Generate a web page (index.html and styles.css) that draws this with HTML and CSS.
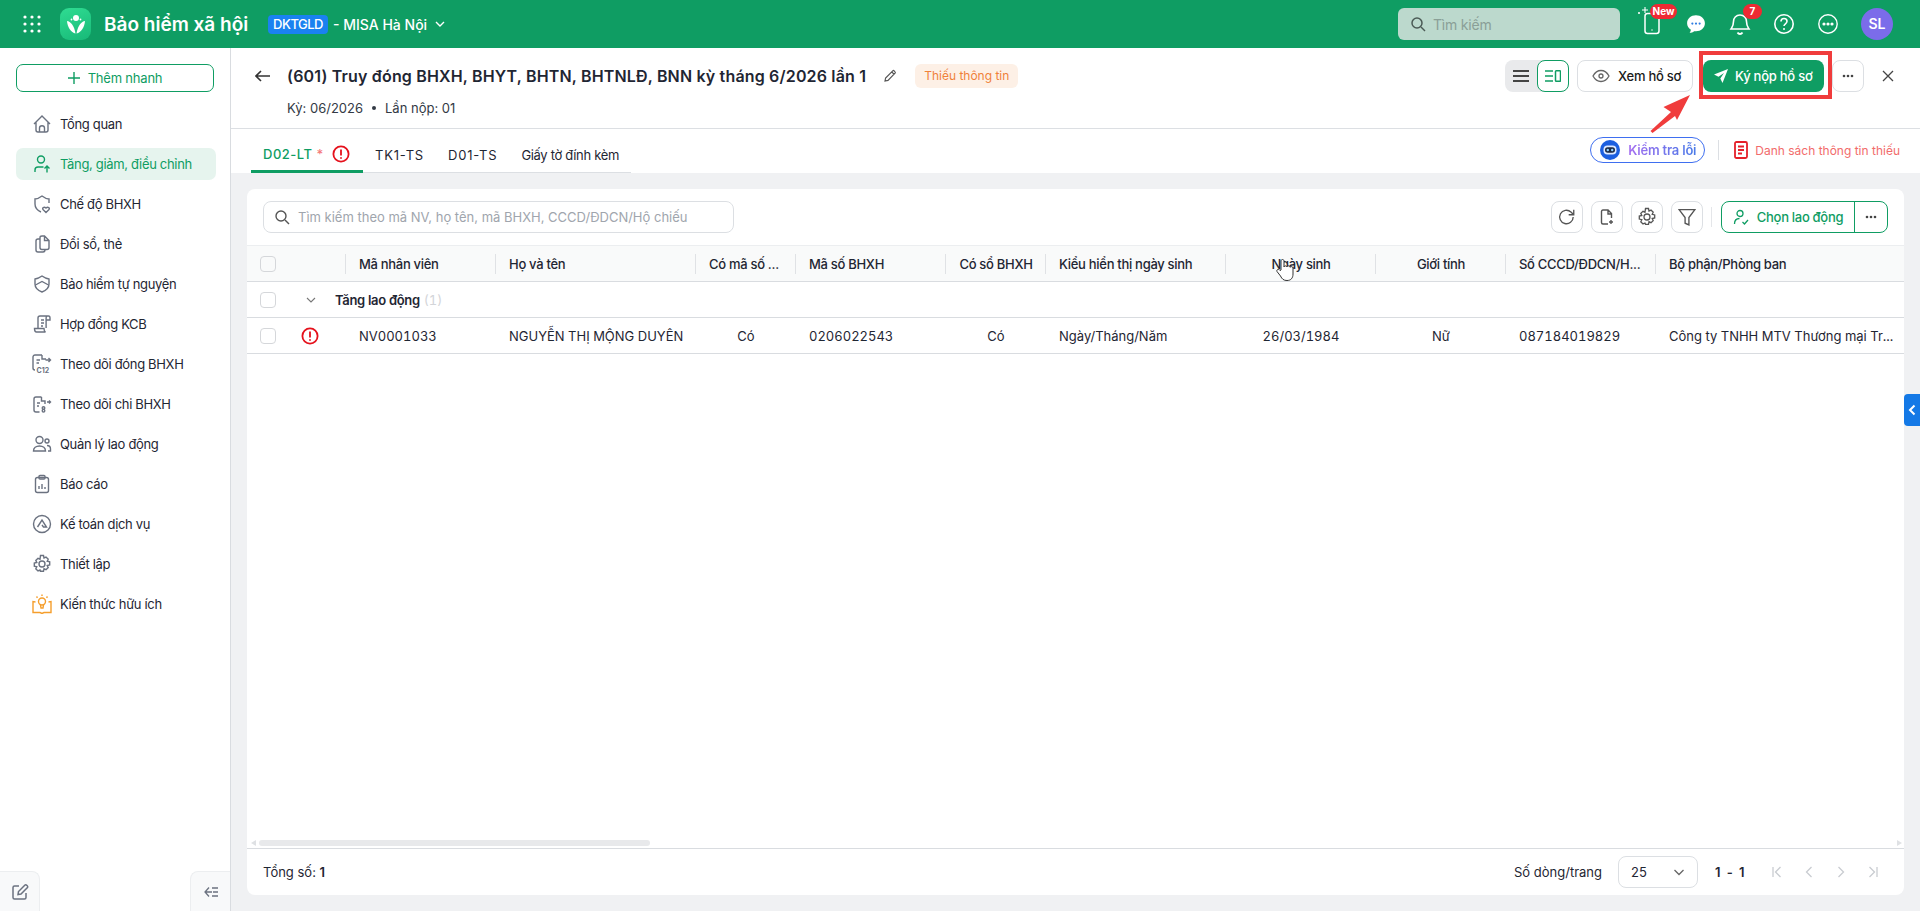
FILE: index.html
```html
<!DOCTYPE html>
<html lang="vi">

<head>
   <meta charset="UTF-8">
   <meta name="viewport" content="width=device-width, initial-scale=1.0">
   <title>Bảo hiểm xã hội</title>

   <link rel="stylesheet" href="styles.css">
</head>

<body>
   <header class="top">
      <svg class="top__grid" width="18" height="18" viewBox="0 0 18 18" fill="#fff">
         <circle cx="2" cy="2" r="1.6"/><circle cx="9" cy="2" r="1.6"/><circle cx="16" cy="2" r="1.6"/>
         <circle cx="2" cy="9" r="1.6"/><circle cx="9" cy="9" r="1.6"/><circle cx="16" cy="9" r="1.6"/>
         <circle cx="2" cy="16" r="1.6"/><circle cx="9" cy="16" r="1.6"/><circle cx="16" cy="16" r="1.6"/>
      </svg>
      <div class="top__logo">
         <svg width="20" height="20" viewBox="0 0 20 20" fill="#fff">
            <circle cx="10" cy="4" r="3"/>
            <circle cx="5.500" cy="5.500" r=".9"/><circle cx="14.500" cy="5.500" r=".9"/>
            <path d="M1 7c3.500.5 7 4 8.500 12.500C5 18.500 1.500 13.500 1 7z"/>
            <path d="M19 7c-3.500.5-7 4-8.500 12.500C15 18.500 18.500 13.500 19 7z"/>
         </svg>
      </div>
      <div class="top__title">Bảo hiểm xã hội</div>
      <div class="top__badge">DKTGLD</div>
      <div class="top__org">- MISA Hà Nội</div>
      <svg class="top__chevron" width="12" height="12" viewBox="0 0 12 12" fill="none" stroke="#fff" stroke-width="1.4">
         <path d="M2 4l4 4 4-4"/>
      </svg>

      <div class="top__right">
         <div class="top__search">
            <svg width="16" height="16" viewBox="0 0 16 16" fill="none" stroke="#4b5a55" stroke-width="1.5">
               <circle cx="7" cy="7" r="5"/><path d="M11 11l4 4"/>
            </svg>
            <span>Tìm kiếm</span>
         </div>
         <div class="top__icons">
            <div class="top__icon">
               <svg class="top__phone" width="28" height="32" viewBox="0 0 28 32" fill="none" stroke="#fff" stroke-width="1.5">
                  <rect x="7" y="5.500" width="14" height="20" rx="2.500"/>
                  <path d="M13.500 22h1"/>
                  <path d="M7 -1v6M4 2h6M1 4v2M0 5h2" stroke-width="1.100"/>
               </svg>
               <span class="top__new">New</span>
            </div>
            <div class="top__icon">
               <svg width="20" height="20" viewBox="0 0 22 22">
                  <path fill="#fff" d="M11 1.500c5.400 0 9.800 3.800 9.800 8.800s-4.400 8.800-9.800 8.800c-.7 0-1.400-.1-2-.2-1.400 1.200-3.200 1.700-5 1.700 .8-.9 1.300-2 1.400-3.200-2.500-1.500-4.200-4-4.200-7.100 0-5 4.300-8.800 9.600-8.800z"/>
                  <circle cx="7" cy="10.500" r="1.200" fill="#2f7de1"/><circle cx="11" cy="10.500" r="1.200" fill="#2f7de1"/><circle cx="15" cy="10.500" r="1.200" fill="#2f7de1"/>
               </svg>
            </div>
            <div class="top__icon">
               <svg width="22" height="24" viewBox="0 0 22 24" fill="none" stroke="#fff" stroke-width="1.6">
                  <path d="M11 3c-4 0-6.500 3-6.500 6.500 0 4.500-1.500 6-2.500 7.500h18c-1-1.500-2.500-3-2.500-7.500C17.500 6 15 3 11 3z"/>
                  <path d="M8.500 20.500c.6 1 1.500 1.500 2.500 1.500s1.900-.5 2.500-1.500" stroke-width="1.800"/>
               </svg>
               <span class="top__count">7</span>
            </div>
            <div class="top__icon">
               <svg width="22" height="22" viewBox="0 0 22 22" fill="none" stroke="#fff" stroke-width="1.6">
                  <circle cx="11" cy="11" r="9.200"/>
                  <path d="M8 8.500c0-1.800 1.400-3 3-3s3 1.200 3 2.800c0 2.400-3 2.500-3 4.700"/>
                  <circle cx="11" cy="16" r="1" fill="#fff" stroke="none"/>
               </svg>
            </div>
            <div class="top__icon">
               <svg width="22" height="22" viewBox="0 0 22 22" fill="none" stroke="#fff" stroke-width="1.400">
                  <circle cx="11" cy="11" r="9.200"/>
                  <circle cx="7" cy="11" r=".9" fill="#fff"/><circle cx="11" cy="11" r=".9" fill="#fff"/><circle cx="15" cy="11" r=".9" fill="#fff"/>
               </svg>
            </div>
         </div>
         <div class="top__avatar">SL</div>
      </div>
   </header>

   <div class="app">
      <aside class="side">
         <div class="side__add">
            <svg width="12" height="12" viewBox="0 0 12 12" stroke="#0f9d63" stroke-width="1.400"><path d="M6 0v12M0 6h12"/></svg>
            Thêm nhanh
         </div>

         <nav class="side__nav">
            <div class="side__item">
               <svg class="side__icon" viewBox="0 0 20 20"><path d="M2 10l8-8 8 8M4 8.500V16c0 1 .5 2 2 2h8c1.500 0 2-1 2-2V8.500M7.500 18v-4c0-3 5-3 5 0v4"/></svg>
               Tổng quan
            </div>
            <div class="side__item side__item--active">
               <svg class="side__icon" viewBox="0 0 20 20"><circle cx="9" cy="5.500" r="3.500"/><path d="M3 18v-2c0-2 1-3 3-3h5.500M15 18.500v-6.500M12.500 14.500L15 12l2.500 2.500"/></svg>
               Tăng, giảm, điều chỉnh
            </div>
            <div class="side__item">
               <svg class="side__icon" viewBox="0 0 20 20"><path d="M17 9V5c-3 0-5-1.500-7-3-2 1.500-4 3-7 3v5c0 4 2.500 6.500 6 8"/><path d="M14 18.500l-3-3c-1.200-1.500 1-3.200 3-1.500 2-1.700 4.200 0 3 1.500z"/></svg>
               Chế độ BHXH
            </div>
            <div class="side__item">
               <svg class="side__icon" viewBox="0 0 20 20"><path d="M8 13.500V3.500C8 2.500 9 2 10 2h2.500L17 6.500v7c0 1-1 2-2 2h-5c-1 0-2-1-2-2zM12.500 2v4.500H17"/><path d="M8 5H6C5 5 4 6 4 7v9c0 1 1 2 2 2h5c1 0 2-1 2-2.500"/></svg>
               Đổi sổ, thẻ
            </div>
            <div class="side__item">
               <svg class="side__icon" viewBox="0 0 20 20"><path d="M10 2C8 3.500 6 4.500 3 5v5c0 4 3 6.500 7 8 4-1.500 7-4 7-8V5c-3-.5-5-1.500-7-3z"/><path d="M3.500 11L10 7.500l6.500 3.500"/></svg>
               Bảo hiểm tự nguyện
            </div>
            <div class="side__item">
               <svg class="side__icon" viewBox="0 0 20 20"><path d="M6 14V4c0-1 1-2 2-2h8.500c1 0 1.500 1 1.500 2v2h-3.500M15 2c-.8.300-.9 1-.9 2v10M9 6h3M9 9h3M9 12h2M2.500 14.500H12c0 1.500.5 3 1.500 3.500h-9c-1.500 0-2-2-2-3.500z"/></svg>
               Hợp đồng KCB
            </div>
            <div class="side__item">
               <svg class="side__icon" viewBox="0 0 20 20"><path d="M10 1H3C2 1 1 1.500 1 3v11c0 1 .5 2 2 2M10 1v4h4M4.500 6H8M4.500 9H7M13.500 6h5M16.500 4l2 2-2 2"/><text x="4.500" y="19" class="side__c12">C12</text></svg>
               Theo dõi đóng BHXH
            </div>
            <div class="side__item">
               <svg class="side__icon" viewBox="0 0 20 20"><path d="M9.500 3H4C3 3 2 3.500 2 5v11c0 1 1 2 2 2h3.500M9.500 3v4H13v3M15 8h3.500M17 6.500L18.500 8 17 9.500M5 9h3M5 12h2"/><circle cx="11.500" cy="14" r="1.300"/><circle cx="11.500" cy="16.700" r="1.300"/></svg>
               Theo dõi chi BHXH
            </div>
            <div class="side__item">
               <svg class="side__icon" viewBox="0 0 20 20"><circle cx="7.500" cy="6" r="3.500"/><circle cx="15" cy="7" r="2"/><path d="M1.500 17c0-3 2.500-5 6-5s6 2 6 5zM15 11.500c2 0 3.500 1.500 3.500 3.500V17h-2.500"/></svg>
               Quản lý lao động
            </div>
            <div class="side__item">
               <svg class="side__icon" viewBox="0 0 20 20"><rect x="3.500" y="3.500" width="13" height="15" rx="2"/><rect x="7" y="1.500" width="6" height="3.500" rx="1"/><path d="M7 15v-3M10 15v-5M13 15v-2"/></svg>
               Báo cáo
            </div>
            <div class="side__item">
               <svg class="side__icon" viewBox="0 0 20 20"><circle cx="10" cy="10" r="8.500"/><path d="M5.500 13L10 6l4.500 7h-3L10 11"/></svg>
               Kế toán dịch vụ
            </div>
            <div class="side__item">
               <svg class="side__icon" viewBox="0 0 20 20"><circle cx="10" cy="10" r="3"/><path d="M8.500 1.500h3l.5 2.500 2-.9 2.200 2.100-1 2.100 2.500.6v3l-2.500.6 1 2.100-2.200 2.100-2-.9-.5 2.500h-3L8 16l-2 .9-2.200-2.100 1-2.100-2.500-.6v-3L4.800 8.500l-1-2.100L6 4.300l2 .9z"/></svg>
               Thiết lập
            </div>
            <div class="side__item">
               <svg class="side__icon side__icon--orange" viewBox="0 0 20 20"><circle cx="10" cy="7.500" r="3.500"/><path d="M8.500 11l.5 3h2l.5-3M10 .5V2M4.500 2.500L5.500 3.700M15.500 2.500l-1 1.200M3.500 8L1 7.500v11h7l2 1 2-1h7v-11L16.500 8"/></svg>
               Kiến thức hữu ích
            </div>
         </nav>

         <div class="side__bottom">
            <div class="side__tool">
               <svg width="18" height="18" viewBox="0 0 18 18" fill="none" stroke="#6b7280" stroke-width="1.500"><path d="M8 3H3.500C2.500 3 2 3.500 2 4.500v10c0 1 .5 1.500 1.500 1.500h10c1 0 1.500-.5 1.500-1.500V10M7 11.500l.5-3 6.500-6.500c1-1 3.500 1.500 2.500 2.500L10 11z"/></svg>
            </div>
            <div class="side__tool">
               <svg width="14" height="12" viewBox="0 0 14 12" fill="none" stroke="#6b7280" stroke-width="1.300"><path d="M5 1.500L1 6l4 4.500M1 6h7M8 2h6M9 6h5M8 10h6"/></svg>
            </div>
         </div>
      </aside>

      <main class="main">
         <section class="head">
            <div class="head__left">
               <div class="head__line">
                  <svg class="head__back" width="16" height="12" viewBox="0 0 16 12" fill="none" stroke="#333" stroke-width="1.600"><path d="M6 1L1 6l5 5M1 6h14"/></svg>
                  <div class="head__title">(601) Truy đóng BHXH, BHYT, BHTN, BHTNLĐ, BNN kỳ tháng 6/2026 lần 1</div>
                  <svg width="14" height="14" viewBox="0 0 14 14" fill="none" stroke="#555" stroke-width="1.200"><path d="M2 12l.6-3L10 1.600c.6-.6 2.900 1.700 2.300 2.300L5 11.400zM8.800 3l2.200 2.200"/></svg>
                  <div class="head__tag">Thiếu thông tin</div>
               </div>
               <div class="head__sub">Kỳ: 06/2026<span class="head__dot"></span>Lần nộp: 01</div>
            </div>

            <div class="head__actions">
               <div class="view">
                  <div class="view__item">
                     <svg width="16" height="12" viewBox="0 0 16 12" stroke="#444" stroke-width="1.800"><path d="M0 1h16M0 6h16M0 11h16"/></svg>
                  </div>
                  <div class="view__item view__item--on">
                     <svg width="16" height="12" viewBox="0 0 16 12" fill="none" stroke="#0f9d63" stroke-width="1.500"><path d="M0 1h8M0 6h8M0 11h8"/><rect x="10.500" y=".8" width="5" height="10.400" rx=".8"/></svg>
                  </div>
               </div>
               <div class="btn btn--see">
                  <svg width="18" height="14" viewBox="0 0 18 14" fill="none" stroke="#666" stroke-width="1.300"><path d="M1 7c2-3.700 4.800-5.500 8-5.500S15 3.300 17 7c-2 3.700-4.800 5.500-8 5.500S3 10.700 1 7z"/><circle cx="9" cy="7" r="2"/></svg>
                  Xem hồ sơ
               </div>
               <div class="btn btn--main">
                  <svg width="14" height="14" viewBox="0 0 14 14" fill="#fff"><path d="M14 0L0 5.500l4.500 2.200L10 4 6.300 9.500 8.500 14z"/></svg>
                  Ký nộp hồ sơ
                  <span class="mark"></span>
               </div>
               <div class="btn btn--more">
                  <svg width="12" height="4" viewBox="0 0 12 4" fill="#444"><circle cx="2" cy="2" r="1.300"/><circle cx="6" cy="2" r="1.300"/><circle cx="10" cy="2" r="1.300"/></svg>
               </div>
               <svg class="head__close" width="12" height="12" viewBox="0 0 12 12" stroke="#444" stroke-width="1.300"><path d="M1 1l10 10M11 1L1 11"/></svg>
            </div>

            <svg class="arrow" width="42" height="42" viewBox="0 0 42 42"><path fill="#f03c3c" d="M40 2L13.500 14l7.500 5L.5 38l2 2L25 23l2 4z"/></svg>
         </section>

         <section class="tabs">
            <div class="tabs__list">
               <div class="tab tab--on tab--code">D02-LT <span class="tab__star">*</span>
                  <svg class="err" viewBox="0 0 18 18"><circle cx="9" cy="9" r="7.600"/><path d="M9 4.500v6M9 12.300v1.400"/></svg>
               </div>
               <div class="tab tab--code">TK1-TS</div>
               <div class="tab tab--code">D01-TS</div>
               <div class="tab tab--doc">Giấy tờ đính kèm</div>
            </div>

            <div class="tabs__right">
               <div class="check">
                  <svg width="20" height="20" viewBox="0 0 20 20">
                     <circle cx="10" cy="10" r="10" fill="#1c5fe0"/>
                     <rect x="3.500" y="5.500" width="13" height="9" rx="4" fill="#dfeaff"/>
                     <rect x="5" y="7.200" width="10" height="5.600" rx="2.700" fill="#1e2a44"/>
                     <circle cx="7.800" cy="10" r="1.200" fill="#8fd0ff"/><circle cx="12.200" cy="10" r="1.200" fill="#8fd0ff"/>
                  </svg>
                  <span class="check__text">Kiểm tra lỗi</span>
               </div>
               <div class="tabs__sep"></div>
               <div class="missing">
                  <svg width="14" height="18" viewBox="0 0 14 18" fill="none" stroke="#e5202a" stroke-width="1.800"><rect x="1" y="1" width="12" height="16" rx="1.500"/><path d="M4 5.500h6M4 9h6M4 12.500h4"/></svg>
                  Danh sách thông tin thiếu
               </div>
            </div>
         </section>

         <section class="body">
            <div class="card">
               <div class="bar">
                  <div class="bar__search">
                     <svg width="16" height="16" viewBox="0 0 16 16" fill="none" stroke="#555" stroke-width="1.400"><circle cx="7" cy="7" r="5"/><path d="M11 11l4 4"/></svg>
                     <span>Tìm kiếm theo mã NV, họ tên, mã BHXH, CCCD/ĐDCN/Hộ chiếu</span>
                  </div>
                  <div class="bar__right">
                     <div class="bar__btn">
                        <svg width="18" height="18" viewBox="0 0 16 16" fill="none" stroke="#555" stroke-width="1.200"><path d="M13.500 8a6 6 0 1 1-2-4.500L14 6M14 1.500V6H9.500"/></svg>
                     </div>
                     <div class="bar__btn">
                        <svg width="16" height="16" viewBox="0 0 16 16" fill="none" stroke="#555" stroke-width="1.400"><path d="M9 15H4c-1 0-1.500-.5-1.500-1.500v-11C2.500 1.500 3 1 4 1h5l3.500 3.500V9M9 1v4h3.500M12 11v4M10 13h4"/></svg>
                     </div>
                     <div class="bar__btn">
                        <svg width="20" height="20" viewBox="0 0 20 20" fill="none" stroke="#555" stroke-width="1.300"><circle cx="10" cy="10" r="3"/><path d="M8.500 1.500h3l.5 2.500 2-.9 2.200 2.100-1 2.100 2.500.6v3l-2.500.6 1 2.100-2.200 2.100-2-.9-.5 2.500h-3L8 16l-2 .9-2.200-2.100 1-2.100-2.500-.6v-3L4.800 8.500l-1-2.100L6 4.300l2 .9z"/></svg>
                     </div>
                     <div class="bar__btn">
                        <svg width="18" height="18" viewBox="0 0 16 16" fill="none" stroke="#555" stroke-width="1.200"><path d="M1 1.500h14L9.700 8.500v6.500l-3.400-1.500v-5z"/></svg>
                     </div>
                     <div class="bar__sep"></div>
                     <div class="pick">
                        <div class="pick__main">
                           <svg width="16" height="16" viewBox="0 0 16 16" fill="none" stroke="#0f9d63" stroke-width="1.300"><circle cx="7" cy="4.500" r="3"/><path d="M1.500 15c0-3.500 2-5.500 5-5.500M9.500 13l2 2 3.500-4"/></svg>
                           Chọn lao động
                        </div>
                        <div class="pick__more">
                           <svg width="12" height="4" viewBox="0 0 12 4" fill="#444"><circle cx="2" cy="2" r="1.300"/><circle cx="6" cy="2" r="1.300"/><circle cx="10" cy="2" r="1.300"/></svg>
                        </div>
                     </div>
                  </div>
               </div>

               <div class="grid">
                  <table class="table">
                     <colgroup>
                        <col class="w40"><col class="w59"><col class="w150"><col class="w200"><col class="w100"><col class="w150"><col class="w100"><col class="w180"><col class="w150"><col class="w130"><col class="w150"><col class="w248">
                     </colgroup>
                     <thead>
                        <tr>
                           <th class="c"><span class="box"></span></th>
                           <th class="sep"></th>
                           <th class="sep">Mã nhân viên</th>
                           <th class="sep">Họ và tên</th>
                           <th class="sep">Có mã số ...</th>
                           <th class="sep">Mã số BHXH</th>
                           <th class="sep c">Có sổ BHXH</th>
                           <th class="sep">Kiểu hiển thị ngày sinh</th>
                           <th class="sep c">Ngày sinh</th>
                           <th class="sep c">Giới tính</th>
                           <th class="sep">Số CCCD/ĐDCN/H...</th>
                           <th>Bộ phận/Phòng ban</th>
                        </tr>
                     </thead>
                     <tbody>
                        <tr>
                           <td class="c"><span class="box"></span></td>
                           <td colspan="11">
                              <div class="group">
                                 <svg width="10" height="10" viewBox="0 0 10 10" fill="none" stroke="#777" stroke-width="1.100"><path d="M1 3l4 4 4-4"/></svg>
                                 <b>Tăng lao động</b> <span class="group__n">(1)</span>
                              </div>
                           </td>
                        </tr>
                        <tr>
                           <td class="c"><span class="box"></span></td>
                           <td class="t"><svg class="err" viewBox="0 0 18 18"><circle cx="9" cy="9" r="7.600"/><path d="M9 4.500v6M9 12.300v1.400"/></svg></td>
                           <td>NV0001033</td>
                           <td>NGUYỄN THỊ MỘNG DUYÊN</td>
                           <td class="c">Có</td>
                           <td>0206022543</td>
                           <td class="c">Có</td>
                           <td>Ngày/Tháng/Năm</td>
                           <td class="c">26/03/1984</td>
                           <td class="c">Nữ</td>
                           <td>087184019829</td>
                           <td>Công ty TNHH MTV Thương mại Tr...</td>
                        </tr>
                     </tbody>
                  </table>
               </div>

               <div class="scroll">
                  <span class="scroll__left"></span>
                  <div class="scroll__track"><div class="scroll__thumb"></div></div>
                  <span class="scroll__right"></span>
               </div>

               <div class="foot">
                  <div>Tổng số: <b>1</b></div>
                  <div class="foot__right">
                     <span>Số dòng/trang</span>
                     <div class="foot__select">25
                        <svg width="12" height="12" viewBox="0 0 12 12" fill="none" stroke="#666" stroke-width="1.300"><path d="M1.500 4l4.500 4.500L10.500 4"/></svg>
                     </div>
                     <b class="foot__count">1 - 1</b>
                     <div class="pager">
                        <svg width="10" height="12" viewBox="0 0 10 12"><path d="M1 1v10M8.500 1l-5 5 5 5"/></svg>
                        <svg width="10" height="12" viewBox="0 0 10 12"><path d="M7.500 1l-5 5 5 5"/></svg>
                        <svg width="10" height="12" viewBox="0 0 10 12"><path d="M2.500 1l5 5-5 5"/></svg>
                        <svg width="10" height="12" viewBox="0 0 10 12"><path d="M9 1v10M1.500 1l5 5-5 5"/></svg>
                     </div>
                  </div>
               </div>
            </div>
         </section>
      </main>
   </div>

   <div class="drawer">
      <svg width="8" height="12" viewBox="0 0 8 12" fill="none" stroke="#fff" stroke-width="2"><path d="M6.500 1.500L2 6l4.500 4.500"/></svg>
   </div>

   <svg class="hand" width="18" height="24" viewBox="0 0 18 24" fill="#fff" stroke="#333" stroke-width="1">
      <path d="M5 12V3c0-2 3-2 3 0v6c0-1.500 3-1.500 3 0 0-1.500 3-1.500 3 .3 .5-1 3-1 3 .7v6c0 4-2 6.500-6 6.500-3.500 0-5-1.500-6.500-4.500L1 13.500c-1-2 2-3 3-1z"/>
   </svg>
</body>

</html>
```

FILE: styles.css
```css
* {
   font-family: Inter, "Liberation Sans", sans-serif;
   box-sizing: border-box;
   margin: 0;
   padding: 0;
}

body {
   width: 1920px;
   height: 911px;
   overflow: hidden;
   font-size: 13px;
   color: #1f2633;
   background-color: #fff;
}

.top {
   height: 48px;
   background-color: #0f9d63;
   color: #fff;
   display: flex;
   align-items: center;
   padding-left: 23px;
}

.top__grid {
   margin-right: 19px;
}

.top__logo {
   width: 31px;
   height: 32px;
   border-radius: 9px;
   background: linear-gradient(160deg, #2fdc92, #18b978);
   display: flex;
   align-items: center;
   justify-content: center;
   margin-right: 13px;
}

.top__title {
   font-size: 19px;
   font-weight: 600;
   width: 164px;
}

.top__badge {
   width: 60px;
   height: 19px;
   line-height: 19px;
   text-align: center;
   border-radius: 4px;
   background-color: #1a82f0;
   font-size: 13px;
   font-weight: 500;
   letter-spacing: -.5px;
   margin-right: 5px;
}

.top__org {
   font-size: 14px;
   font-weight: 500;
   margin-right: 7px;
}

.top__right {
   margin-left: auto;
   display: flex;
   align-items: center;
   padding-right: 27px;
}

.top__search {
   width: 222px;
   height: 32px;
   border-radius: 6px;
   background-color: #bcd9cd;
   display: flex;
   align-items: center;
   gap: 7px;
   padding-left: 12px;
   color: #8a9f97;
   font-size: 14px;
   letter-spacing: -.2px;
   margin-right: 10px;
}

.top__icons {
   display: flex;
   margin-right: 11px;
}

.top__icon {
   position: relative;
   width: 44px;
   height: 32px;
   display: flex;
   align-items: center;
   justify-content: center;
}

.top__phone {
   overflow: visible;
}

.top__new {
   position: absolute;
   top: -4px;
   left: 20px;
   width: 27px;
   height: 15px;
   line-height: 15px;
   text-align: center;
   border-radius: 8px;
   background-color: #ee2a33;
   font-size: 10px;
   font-weight: 700;
}

.top__count {
   position: absolute;
   top: -4px;
   left: 25px;
   width: 19px;
   height: 15px;
   line-height: 15px;
   text-align: center;
   border-radius: 8px;
   background-color: #ee2a33;
   font-size: 10px;
   font-weight: 700;
}

.top__avatar {
   width: 32px;
   height: 32px;
   border-radius: 50%;
   background-color: #7b6cea;
   text-align: center;
   line-height: 32px;
   font-size: 14px;
   font-weight: 600;
}

.app {
   display: flex;
   height: 863px;
}

.side {
   width: 231px;
   flex-shrink: 0;
   border-right: 1px solid #d9dce0;
   padding: 16px 0 0 16px;
   display: flex;
   flex-direction: column;
}

.side__add {
   width: 198px;
   height: 28px;
   border: 1px solid #0f9d63;
   border-radius: 7px;
   color: #0f9d63;
   letter-spacing: -.2px;
   display: flex;
   align-items: center;
   justify-content: center;
   gap: 8px;
}

.side__nav {
   margin-top: 16px;
}

.side__item {
   width: 200px;
   height: 32px;
   margin-bottom: 8px;
   border-radius: 7px;
   display: flex;
   align-items: center;
   gap: 8px;
   padding-left: 16px;
   letter-spacing: -.33px;
}

.side__item--active {
   background-color: #e6f4ee;
   color: #0f9d63;
}

.side__icon {
   width: 20px;
   height: 20px;
   flex-shrink: 0;
   fill: none;
   stroke: #6b7280;
   stroke-width: 1.4;
}

.side__item--active .side__icon {
   stroke: #0f9d63;
}

.side__icon--orange {
   stroke: #f59e2c;
}

.side__c12 {
   font-size: 7px;
   font-weight: 700;
   letter-spacing: 0;
   fill: #6b7280;
   stroke: none;
}

.side__bottom {
   margin: auto 0 0 -16px;
   display: flex;
   justify-content: space-between;
}

.side__tool {
   width: 40px;
   height: 40px;
   background-color: #f8f9fa;
   border: 1px solid #eceef0;
   border-bottom: 0;
   display: flex;
   align-items: center;
   justify-content: center;
}

.side__tool:first-child {
   border-left: 0;
   border-top-right-radius: 8px;
}

.side__tool:last-child {
   border-right: 0;
   border-top-left-radius: 8px;
}

.main {
   flex: 1;
   min-width: 0;
   display: flex;
   flex-direction: column;
}

.head {
   position: relative;
   height: 81px;
   border-bottom: 1px solid #dcdfe3;
   display: flex;
   justify-content: space-between;
   padding: 12px 0 0 24px;
}

.head__line {
   display: flex;
   align-items: center;
   height: 32px;
}

.head__back {
   margin-right: 16px;
}

.head__title {
   font-size: 16px;
   font-weight: 600;
   letter-spacing: .17px;
   margin-right: 17px;
}

.head__tag {
   margin-left: 18px;
   height: 24px;
   line-height: 24px;
   padding: 0 9px;
   border-radius: 6px;
   background-color: #fdf0e6;
   color: #f0813a;
   font-size: 12px;
}

.head__sub {
   margin: 8px 0 0 32px;
   display: flex;
   align-items: center;
   color: #333a45;
}

.head__dot {
   width: 4px;
   height: 4px;
   border-radius: 50%;
   background-color: #333a45;
   margin: 0 9px 0 9px;
}

.head__actions {
   display: flex;
   align-items: flex-start;
   padding-right: 26px;
}

.view {
   display: flex;
   background-color: #e9eaec;
   border-radius: 8px;
   margin-right: 8px;
}

.view__item {
   width: 32px;
   height: 32px;
   display: flex;
   align-items: center;
   justify-content: center;
   border-radius: 8px;
}

.view__item--on {
   background-color: #fff;
   border: 1px solid #0f9d63;
}

.btn {
   position: relative;
   height: 32px;
   border-radius: 8px;
   display: flex;
   align-items: center;
   font-weight: 500;
   letter-spacing: -.25px;
}

.btn--see {
   width: 116px;
   border: 1px solid #dcdfe3;
   padding-left: 14px;
   gap: 8px;
   color: #1b1b1b;
   margin-right: 10px;
}

.btn--main {
   width: 121px;
   background-color: #0f9d63;
   color: #fff;
   padding-left: 11px;
   gap: 7px;
   margin-right: 8px;
}

.btn--more {
   width: 32px;
   border: 1px solid #dcdfe3;
   justify-content: center;
   margin-right: 18px;
}

.head__close {
   margin-top: 10px;
}

.mark {
   position: absolute;
   top: -9px;
   left: -4px;
   width: 133px;
   height: 48px;
   border: 4px solid #f03c3c;
}

.arrow {
   position: absolute;
   top: 45px;
   left: 1419px;
}

.tabs {
   height: 44px;
   display: flex;
   justify-content: space-between;
   padding-left: 20px;
}

.tabs__list {
   display: flex;
   border-bottom: 1px solid #dcdfe3;
}

.tab {
   display: flex;
   align-items: center;
   gap: 4px;
   padding: 8px 12px 0;
}

.tab--code {
   letter-spacing: .8px;
}

.tab--doc {
   letter-spacing: -.33px;
}

.tab--on {
   width: 112px;
   color: #0f9d63;
   font-weight: 500;
   letter-spacing: .5px;
   border-bottom: 3px solid #0f9d63;
   margin-bottom: -1px;
}

.tab__star {
   color: #f47b7b;
   margin-right: 4px;
}

.err {
   width: 18px;
   height: 18px;
   fill: none;
   stroke: #e5111c;
   stroke-width: 1.8;
}

.tabs__right {
   display: flex;
   align-items: center;
   padding-right: 20px;
   padding-bottom: 2px;
}

.check {
   width: 115px;
   height: 26px;
   border: 1px solid #3f6ff0;
   border-radius: 13px;
   display: flex;
   align-items: center;
   gap: 8px;
   padding-left: 9px;
}

.check__text {
   font-weight: 600;
   letter-spacing: -.2px;
   background: linear-gradient(90deg, #a56ef0, #4a7be8);
   -webkit-background-clip: text;
   color: transparent;
}

.tabs__sep {
   width: 1px;
   height: 20px;
   background-color: #dcdfe3;
   margin: 0 15px 0 13px;
}

.missing {
   display: flex;
   align-items: center;
   gap: 7px;
   color: #f26b6b;
   font-size: 12px;
}

.body {
   flex: 1;
   min-height: 0;
   background-color: #f0f1f3;
   padding: 16px;
}

.card {
   height: 706px;
   background-color: #fff;
   border-radius: 8px;
   display: flex;
   flex-direction: column;
   overflow: hidden;
}

.bar {
   height: 56px;
   flex-shrink: 0;
   display: flex;
   align-items: center;
   justify-content: space-between;
   padding: 0 16px;
}

.bar__search {
   width: 471px;
   height: 32px;
   border: 1px solid #dcdfe3;
   border-radius: 8px;
   display: flex;
   align-items: center;
   gap: 8px;
   padding-left: 10px;
   color: #a0a5ad;
}

.bar__right {
   display: flex;
   align-items: center;
   gap: 8px;
}

.bar__btn {
   width: 32px;
   height: 32px;
   border: 1px solid #dcdfe3;
   border-radius: 8px;
   display: flex;
   align-items: center;
   justify-content: center;
}

.bar__sep {
   width: 1px;
   height: 20px;
   background-color: #e4e6e9;
}

.pick {
   width: 167px;
   height: 32px;
   border: 1px solid #0f9d63;
   border-radius: 8px;
   display: flex;
   margin-left: 1px;
   color: #0f9d63;
   font-weight: 500;
   letter-spacing: -.3px;
}

.pick__main {
   flex: 1;
   display: flex;
   align-items: center;
   justify-content: center;
   gap: 8px;
   border-right: 1px solid #0f9d63;
}

.pick__more {
   width: 32px;
   display: flex;
   align-items: center;
   justify-content: center;
}

.grid {
   flex: 1;
   min-height: 0;
   overflow: hidden;
}

.table {
   table-layout: fixed;
   width: 1657px;
   border-collapse: collapse;
}

.w40 { width: 40px; }
.w59 { width: 59px; }
.w100 { width: 100px; }
.w130 { width: 130px; }
.w150 { width: 150px; }
.w180 { width: 180px; }
.w200 { width: 200px; }
.w248 { width: 248px; }

.table th {
   position: relative;
   height: 36px;
   background-color: #f9fafa;
   border-top: 1px solid #eceef0;
   border-bottom: 1px solid #d9dce0;
   font-weight: 500;
   text-align: left;
   padding: 0 13px;
   white-space: nowrap;
   letter-spacing: -.3px;
}

.table th.sep::after {
   content: "";
   position: absolute;
   top: 8px;
   right: 0;
   width: 1px;
   height: 20px;
   background-color: #e0e2e5;
}

.table td {
   height: 36px;
   border-bottom: 1px solid #d9dce0;
   padding: 0 13px;
   white-space: nowrap;
   font-variant-numeric: tabular-nums;
}

.table .c {
   text-align: center;
}

.table .t {
   padding: 0 0 0 14px;
}

.box {
   display: inline-block;
   width: 16px;
   height: 16px;
   border: 1.5px solid #d5d7da;
   border-radius: 4px;
   vertical-align: middle;
}

.table td .err {
   display: block;
}

.group {
   display: flex;
   align-items: center;
   gap: 4px;
   padding-left: 6px;
}

.group svg {
   margin-right: 15px;
}

.group b {
   font-weight: 600;
   letter-spacing: -.33px;
}

.group__n {
   color: #d3d5d9;
}

.scroll {
   height: 11px;
   flex-shrink: 0;
   display: flex;
   align-items: center;
   padding: 0 2px 0 4px;
}

.scroll__left {
   width: 0;
   height: 0;
   border: 3px solid transparent;
   border-right: 5px solid #dfe1e4;
   border-left: 0;
}

.scroll__track {
   flex: 1;
   padding-left: 3px;
}

.scroll__thumb {
   width: 391px;
   height: 6px;
   background-color: #e8e9eb;
   border-radius: 3px;
}

.scroll__right {
   width: 0;
   height: 0;
   border: 3px solid transparent;
   border-left: 5px solid #dfe1e4;
   border-right: 0;
}

.foot {
   height: 47px;
   flex-shrink: 0;
   border-top: 1px solid #d9dce0;
   display: flex;
   align-items: center;
   justify-content: space-between;
   padding: 0 26px 0 16px;
}

.foot b {
   font-weight: 600;
}

.foot__right {
   display: flex;
   align-items: center;
}

.foot__select {
   width: 80px;
   height: 32px;
   border: 1px solid #dcdfe3;
   border-radius: 8px;
   display: flex;
   align-items: center;
   justify-content: space-between;
   padding: 0 12px;
   margin: 0 17px 0 16px;
}

.foot__count {
   width: 30px;
   margin-right: 27px;
   white-space: nowrap;
   letter-spacing: 1.5px;
}

.pager {
   display: flex;
   gap: 22px;
}

.pager svg {
   fill: none;
   stroke: #c9ccd1;
   stroke-width: 1.3;
}

.drawer {
   position: absolute;
   top: 394px;
   right: 0;
   width: 16px;
   height: 32px;
   background-color: #1479e6;
   border-radius: 4px 0 0 4px;
   display: flex;
   align-items: center;
   justify-content: center;
}

.hand {
   position: absolute;
   top: 258px;
   left: 1276px;
}
```
